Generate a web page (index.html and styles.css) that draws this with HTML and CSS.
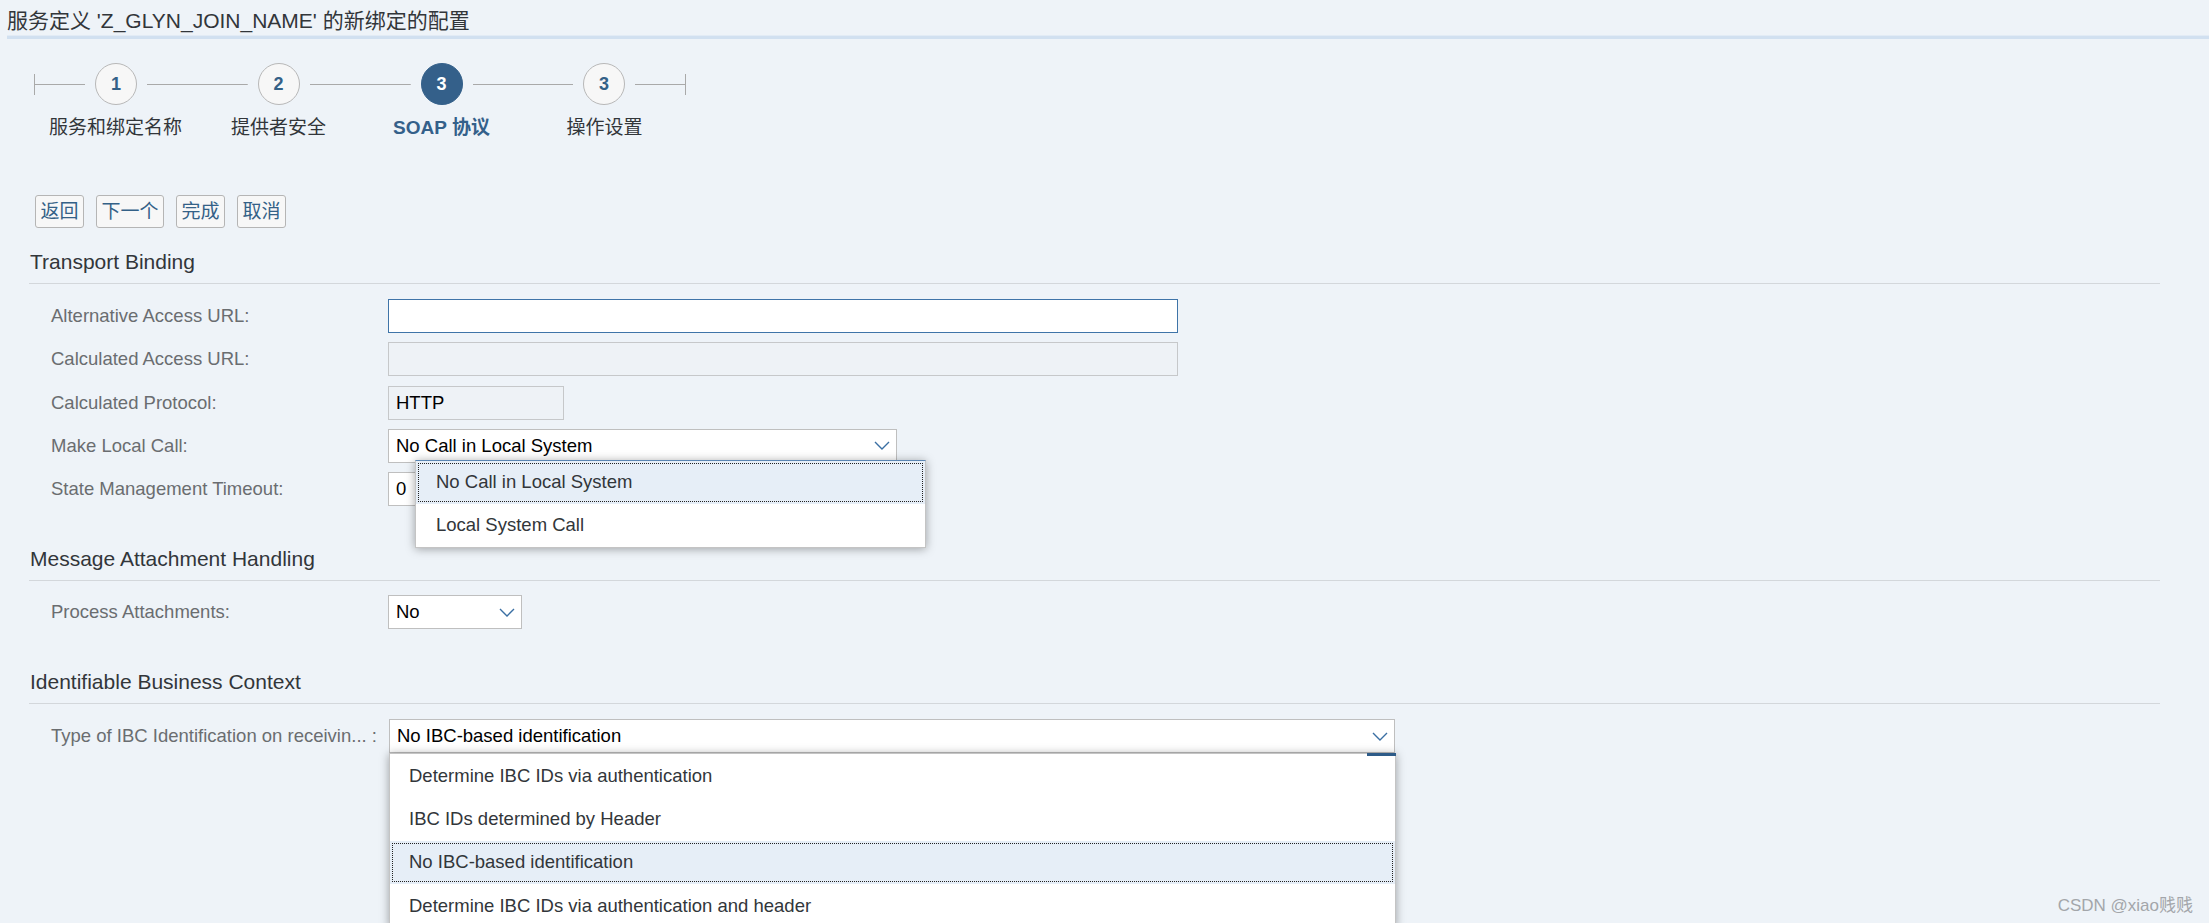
FILE: index.html
```html
<!DOCTYPE html>
<html lang="zh">
<head>
<meta charset="utf-8">
<title>服务定义配置</title>
<link rel="stylesheet" href="styles.css">
</head>
<body>
<div class="page">
  <h1 class="title">服务定义 'Z_GLYN_JOIN_NAME' 的新绑定的配置</h1>

  <div class="stepper">
    <div class="step">
      <div class="track"><span class="line start"></span><span class="circle">1</span><span class="line"></span></div>
      <div class="step-label">服务和绑定名称</div>
    </div>
    <div class="step">
      <div class="track"><span class="line"></span><span class="circle">2</span><span class="line"></span></div>
      <div class="step-label">提供者安全</div>
    </div>
    <div class="step active">
      <div class="track"><span class="line"></span><span class="circle">3</span><span class="line"></span></div>
      <div class="step-label">SOAP 协议</div>
    </div>
    <div class="step">
      <div class="track"><span class="line"></span><span class="circle">3</span><span class="line end"></span></div>
      <div class="step-label">操作设置</div>
    </div>
  </div>

  <div class="toolbar">
    <button class="btn">返回</button>
    <button class="btn">下一个</button>
    <button class="btn">完成</button>
    <button class="btn">取消</button>
  </div>

  <section class="group group-transport">
    <h2 class="group-title">Transport Binding</h2>
    <div class="form">
      <div class="lbl">Alternative Access URL:</div>
      <div class="field"><div class="input focused w-url"></div></div>

      <div class="lbl">Calculated Access URL:</div>
      <div class="field"><div class="input readonly w-url"></div></div>

      <div class="lbl">Calculated Protocol:</div>
      <div class="field"><div class="input readonly w-proto">HTTP</div></div>

      <div class="lbl">Make Local Call:</div>
      <div class="field">
        <div class="input select w-local"><span>No Call in Local System</span>
          <svg class="chev" viewBox="0 0 16 9" width="16" height="9"><path d="M1 1 L8 8 L15 1" fill="none" stroke="#3a6fa3" stroke-width="1.4"/></svg>
        </div>
        <div class="popup popup-local">
          <div class="item selected">No Call in Local System</div>
          <div class="item">Local System Call</div>
        </div>
      </div>

      <div class="lbl">State Management Timeout:</div>
      <div class="field"><div class="input w-timeout">0</div></div>
    </div>
  </section>

  <section class="group group-message">
    <h2 class="group-title">Message Attachment Handling</h2>
    <div class="form form-message">
      <div class="lbl">Process Attachments:</div>
      <div class="field">
        <div class="input select w-no"><span>No</span>
          <svg class="chev" viewBox="0 0 16 9" width="16" height="9"><path d="M1 1 L8 8 L15 1" fill="none" stroke="#3a6fa3" stroke-width="1.4"/></svg>
        </div>
      </div>
    </div>
  </section>

  <section class="group group-ibc">
    <h2 class="group-title">Identifiable Business Context</h2>
    <div class="form">
      <div class="lbl">Type of IBC Identification on receivin... :</div>
      <div class="field field-ibc">
        <div class="input select w-ibc"><span>No IBC-based identification</span>
          <svg class="chev" viewBox="0 0 16 9" width="16" height="9"><path d="M1 1 L8 8 L15 1" fill="none" stroke="#3a6fa3" stroke-width="1.4"/></svg>
        </div>
        <div class="popup popup-ibc">
          <span class="focus-mark"></span>
          <div class="item">Determine IBC IDs via authentication</div>
          <div class="item">IBC IDs determined by Header</div>
          <div class="item selected">No IBC-based identification</div>
          <div class="item">Determine IBC IDs via authentication and header</div>
        </div>
      </div>
    </div>
  </section>

  <div class="watermark">CSDN @xiao贱贱</div>
</div>
</body>
</html>
```

FILE: styles.css
```css
html, body {
  margin: 0;
  padding: 0;
}
body {
  width: 2209px;
  height: 923px;
  overflow: hidden;
  background: #eef3f8;
  font-family: "Liberation Sans", "Noto Sans CJK SC", sans-serif;
  color: #32363a;
}
.page {
  position: relative;
  height: 923px;
  padding-left: 7px;
  box-sizing: border-box;
}

/* Title */
.title {
  margin: 0;
  padding: 7px 0 1px;
  font-size: 21px;
  line-height: 28px;
  font-weight: normal;
  color: #32363a;
  border-bottom: 3px solid #d1e0f0;
  box-shadow: 0 -1px 0 #e2ebf5 inset;
}

/* Stepper */
.stepper {
  display: flex;
  margin: 24px 0 0 27px;
}
.step {
  width: 163px;
  display: flex;
  flex-direction: column;
  align-items: center;
}
.track {
  width: 100%;
  height: 42px;
  display: flex;
  align-items: center;
}
.line {
  flex: 1;
  height: 21px;
  background: linear-gradient(#a9a9a9, #a9a9a9) center / 100% 1px no-repeat;
}
.line.start { border-left: 1px solid #a9a9a9; }
.line.end { border-right: 1px solid #a9a9a9; }
.circle {
  width: 42px;
  height: 42px;
  margin: 0 10px;
  box-sizing: border-box;
  border: 1px solid #b8b8b8;
  border-radius: 50%;
  background: #f7f7f7;
  color: #346187;
  font-weight: bold;
  font-size: 18px;
  display: flex;
  align-items: center;
  justify-content: center;
}
.step.active .circle {
  background: #34608a;
  border-color: #34608a;
  color: #ffffff;
}
.step-label {
  margin-top: 11px;
  font-size: 19px;
  line-height: 24px;
  white-space: nowrap;
  color: #32363a;
}
.step.active .step-label {
  color: #34608a;
  font-weight: bold;
}

/* Toolbar */
.toolbar {
  display: flex;
  gap: 12px;
  margin: 55px 0 0 28px;
}
.btn {
  height: 33px;
  padding: 0 4.5px;
  border: 1px solid #b5b5b5;
  border-radius: 3px;
  background: #f7f7f7;
  color: #346187;
  font-family: "Liberation Sans", "Noto Sans CJK SC", sans-serif;
  font-size: 19px;
  line-height: 31px;
}

/* Groups */
.group {
  margin: 0 49px 0 22px;
}
.group-transport { margin-top: 22px; }
.group-message { margin-top: 41px; }
.group-ibc { margin-top: 41px; }
.group-title {
  margin: 0;
  font-size: 21px;
  line-height: 24px;
  font-weight: normal;
  color: #32363a;
  padding: 0 0 9px 1px;
  border-bottom: 1px solid #d3d7db;
}
.form {
  display: grid;
  grid-template-columns: 337px 1fr;
  row-gap: 9.25px;
  align-items: center;
  padding: 15px 0 0 22px;
}
.form-message { padding-top: 14px; }
.lbl {
  font-size: 18.5px;
  color: #6a6d70;
  white-space: nowrap;
}
.field {
  position: relative;
}
.input {
  height: 34px;
  box-sizing: border-box;
  border: 1px solid #bfbfbf;
  background: #ffffff;
  display: flex;
  align-items: center;
  padding: 0 6px 0 7px;
  font-size: 18.5px;
  color: #000000;
}
.input.focused { border-color: #3f74a8; }
.input.readonly {
  background: #eef2f6;
  border-color: #c6c8ca;
}
.select { justify-content: space-between; }
.chev { flex: none; }
.w-url { width: 790px; }
.w-proto { width: 176px; }
.w-local { width: 509px; }
.w-timeout { width: 300px; }
.w-no { width: 134px; }
.w-ibc { width: 1006px; margin-left: 1px; }

/* Popups */
.popup {
  position: absolute;
  z-index: 5;
  background: #ffffff;
  border: 1px solid #c4c4c4;
  box-shadow: 0 1px 9px rgba(0, 0, 0, 0.35);
}
.popup-local {
  left: 27px;
  top: 31px;
  width: 511px;
  box-sizing: border-box;
  border-top-color: #5b86b3;
}
.popup-local .item { height: 43px; }
.popup-ibc {
  left: 1px;
  top: 34px;
  width: 1007px;
  box-sizing: border-box;
  padding-top: 0;
}
.item {
  height: 43.3px;
  display: flex;
  align-items: center;
  padding-left: 20px;
  font-size: 18.5px;
  color: #32363a;
  white-space: nowrap;
}
.popup-ibc .item { padding-left: 19px; }
.item.selected {
  background: #e6eef7;
  outline: 1px dotted #222;
  outline-offset: -3px;
}
.focus-mark {
  position: absolute;
  right: -1px;
  top: -1px;
  width: 29px;
  height: 3px;
  background: #2d5b88;
}

/* Watermark */
.watermark {
  position: absolute;
  right: 16px;
  bottom: 7px;
  font-size: 17px;
  line-height: 20px;
  color: #a3a6aa;
}
```
